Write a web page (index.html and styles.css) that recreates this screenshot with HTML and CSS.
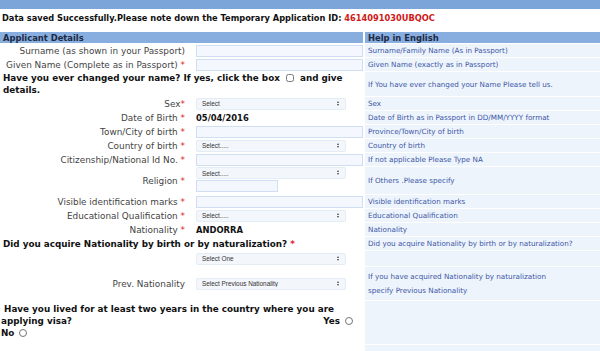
FILE: index.html
```html
<!DOCTYPE html>
<html lang="en">
<head>
    <meta charset="UTF-8">
    <title>Applicant Details</title>
    <link rel="stylesheet" href="styles.css">
</head>
<body>

<div class="topbar"></div>
<div class="msg">Data saved Successfully.Please note down the Temporary Application ID: <span class="appid">4614091030UBQOC</span></div>

<table class="form">
    <colgroup>
        <col class="c-label">
        <col class="c-field">
        <col class="c-help">
    </colgroup>
    <tr class="head">
        <td colspan="2">Applicant Details</td>
        <td class="help">Help in English</td>
    </tr>
    <tr>
        <td class="label">Surname (as shown in your Passport)</td>
        <td class="field"><input type="text" class="txt"></td>
        <td class="help">Surname/Family Name (As in Passport)</td>
    </tr>
    <tr>
        <td class="label">Given Name (Complete as in Passport) <span class="req">*</span></td>
        <td class="field"><input type="text" class="txt"></td>
        <td class="help">Given Name (exactly as in Passport)</td>
    </tr>
    <tr>
        <td colspan="2" class="question">Have you ever changed your name? If yes, click the box <input type="checkbox" class="chk"> and give details.</td>
        <td class="help">If You have ever changed your Name Please tell us.</td>
    </tr>
    <tr>
        <td class="label">Sex<span class="req">*</span></td>
        <td class="field"><span class="sel"><select><option>Select</option></select></span></td>
        <td class="help">Sex</td>
    </tr>
    <tr>
        <td class="label">Date of Birth <span class="req">*</span></td>
        <td class="field"><b class="value">05/04/2016</b></td>
        <td class="help">Date of Birth as in Passport in DD/MM/YYYY format</td>
    </tr>
    <tr>
        <td class="label">Town/City of birth <span class="req">*</span></td>
        <td class="field"><input type="text" class="txt"></td>
        <td class="help">Province/Town/City of birth</td>
    </tr>
    <tr>
        <td class="label">Country of birth <span class="req">*</span></td>
        <td class="field"><span class="sel"><select><option>Select.....</option></select></span></td>
        <td class="help">Country of birth</td>
    </tr>
    <tr>
        <td class="label">Citizenship/National Id No. <span class="req">*</span></td>
        <td class="field"><input type="text" class="txt"></td>
        <td class="help">If not applicable Please Type NA</td>
    </tr>
    <tr class="religion">
        <td class="label">Religion <span class="req">*</span></td>
        <td class="field">
            <span class="sel"><select><option>Select.....</option></select></span>
            <input type="text" class="txt short">
        </td>
        <td class="help">If Others .Please specify</td>
    </tr>
    <tr>
        <td class="label">Visible identification marks <span class="req">*</span></td>
        <td class="field"><input type="text" class="txt"></td>
        <td class="help">Visible identification marks</td>
    </tr>
    <tr>
        <td class="label">Educational Qualification <span class="req">*</span></td>
        <td class="field"><span class="sel"><select><option>Select.....</option></select></span></td>
        <td class="help">Educational Qualification</td>
    </tr>
    <tr>
        <td class="label">Nationality <span class="req">*</span></td>
        <td class="field"><b class="value">ANDORRA</b></td>
        <td class="help">Nationality</td>
    </tr>
    <tr>
        <td colspan="2" class="question">Did you acquire Nationality by birth or by naturalization? <span class="req">*</span></td>
        <td class="help">Did you acquire Nationality by birth or by naturalization?</td>
    </tr>
    <tr class="pad">
        <td class="label"></td>
        <td class="field"><span class="sel"><select><option>Select One</option></select></span></td>
        <td class="help"></td>
    </tr>
    <tr class="prev">
        <td class="label">Prev. Nationality</td>
        <td class="field"><span class="sel"><select><option>Select Previous Nationality</option></select></span></td>
        <td class="help">If you have acquired Nationality by naturalization<br>specify Previous Nationality</td>
    </tr>
    <tr class="lived">
        <td colspan="2" class="question">&nbsp;Have you lived for at least two years in the country where you are applying visa? <span class="yes">Yes <input type="radio" name="lived" class="rad"></span><br>No <input type="radio" name="lived" class="rad"></td>
        <td class="help"></td>
    </tr>
    <tr class="last">
        <td colspan="2"></td>
        <td class="help"></td>
    </tr>
</table>

</body>
</html>
```

FILE: styles.css
```css
body {
    font-family: "DejaVu Sans", Verdana, sans-serif;
    background-color: #fff;
    color: #222;
    margin: 0;
}
.topbar {
    height: 9px;
    background-color: #7ca6da;
}
.msg {
    font-size: 8.25px;
    font-weight: bold;
    color: #111;
    padding: 4px 0 0 2px;
    height: 19px;
}
.appid {
    color: #d01818;
}
.form {
    width: 600px;
    border-collapse: separate;
    border-spacing: 0;
    table-layout: fixed;
}
.c-label {
    width: 190px;
}
.c-field {
    width: 173px;
}
.form td {
    padding: 0;
    height: 13px;
    vertical-align: middle;
    border-bottom: 1px solid #fff;
}
.head td {
    background-color: #88aee0;
    font-size: 8.4px;
    font-weight: bold;
    color: #1d2a44;
    padding-left: 3px;
    height: 11px;
}
.head td.help {
    color: #1d2a44;
    font-size: 8.4px;
}
.label {
    font-size: 8.9px;
    color: #444;
    text-align: right;
    padding-right: 5px !important;
    white-space: nowrap;
}
.req {
    color: #e0262a;
}
.field {
    font-size: 8.4px;
    padding-left: 6px !important;
}
.help {
    background-color: #eef4fc;
    border-left: 2px solid #fff;
    font-size: 7.2px;
    color: #3b56a6;
    padding-left: 3px !important;
}
.txt {
    display: block;
    box-sizing: border-box;
    width: 167px;
    height: 12px;
    margin: 0;
    padding: 0;
    border: 1px solid #cfdff1;
    background-color: #f4f8fe;
}
.txt.short {
    width: 82px;
    margin-top: 1px;
}
.sel {
    display: block;
    position: relative;
    width: 150px;
    height: 12px;
}
.sel select {
    display: block;
    appearance: none;
    -webkit-appearance: none;
    box-sizing: border-box;
    width: 150px;
    height: 12px;
    margin: 0;
    padding: 0 0 0 5px;
    border: 1px solid #e4ecf6;
    border-radius: 2px;
    background-color: #f3f7fc;
    font-family: "Liberation Sans", Arial, sans-serif;
    font-size: 6.4px;
    color: #333;
}
.sel::after {
    content: "";
    position: absolute;
    right: 7px;
    top: 3px;
    width: 0;
    height: 0;
    border-left: 1.5px solid transparent;
    border-right: 1.5px solid transparent;
    border-bottom: 2px solid #444;
}
.sel::before {
    content: "";
    position: absolute;
    right: 7px;
    top: 6px;
    width: 0;
    height: 0;
    border-left: 1.5px solid transparent;
    border-right: 1.5px solid transparent;
    border-top: 2px solid #444;
}
.value {
    font-size: 8.4px;
    color: #111;
}
.question {
    font-size: 8.8px;
    font-weight: bold;
    color: #111;
    padding-left: 3px !important;
    line-height: 12px;
}
.chk {
    width: 8px;
    height: 8px;
    margin: 0 3px;
    vertical-align: -1px;
}
.religion td {
    height: 26px;
}
.religion .label {
    padding-top: 1px !important;
}
.religion .sel {
    margin-top: -2px;
}
.pad td {
    height: 15px;
}
.prev td {
    height: 33px;
}
.prev .help {
    line-height: 14px;
}
.lived td {
    height: 41px;
}
.lived .question {
    padding-left: 1px !important;
    padding-top: 2px !important;
    vertical-align: top;
}
.yes {
    float: right;
    margin-right: 10px;
}
.rad {
    width: 8px;
    height: 8px;
    margin: 0 0 0 2px;
    vertical-align: -1px;
}
.last td {
    height: 10px;
    border-bottom: 0;
}
```
